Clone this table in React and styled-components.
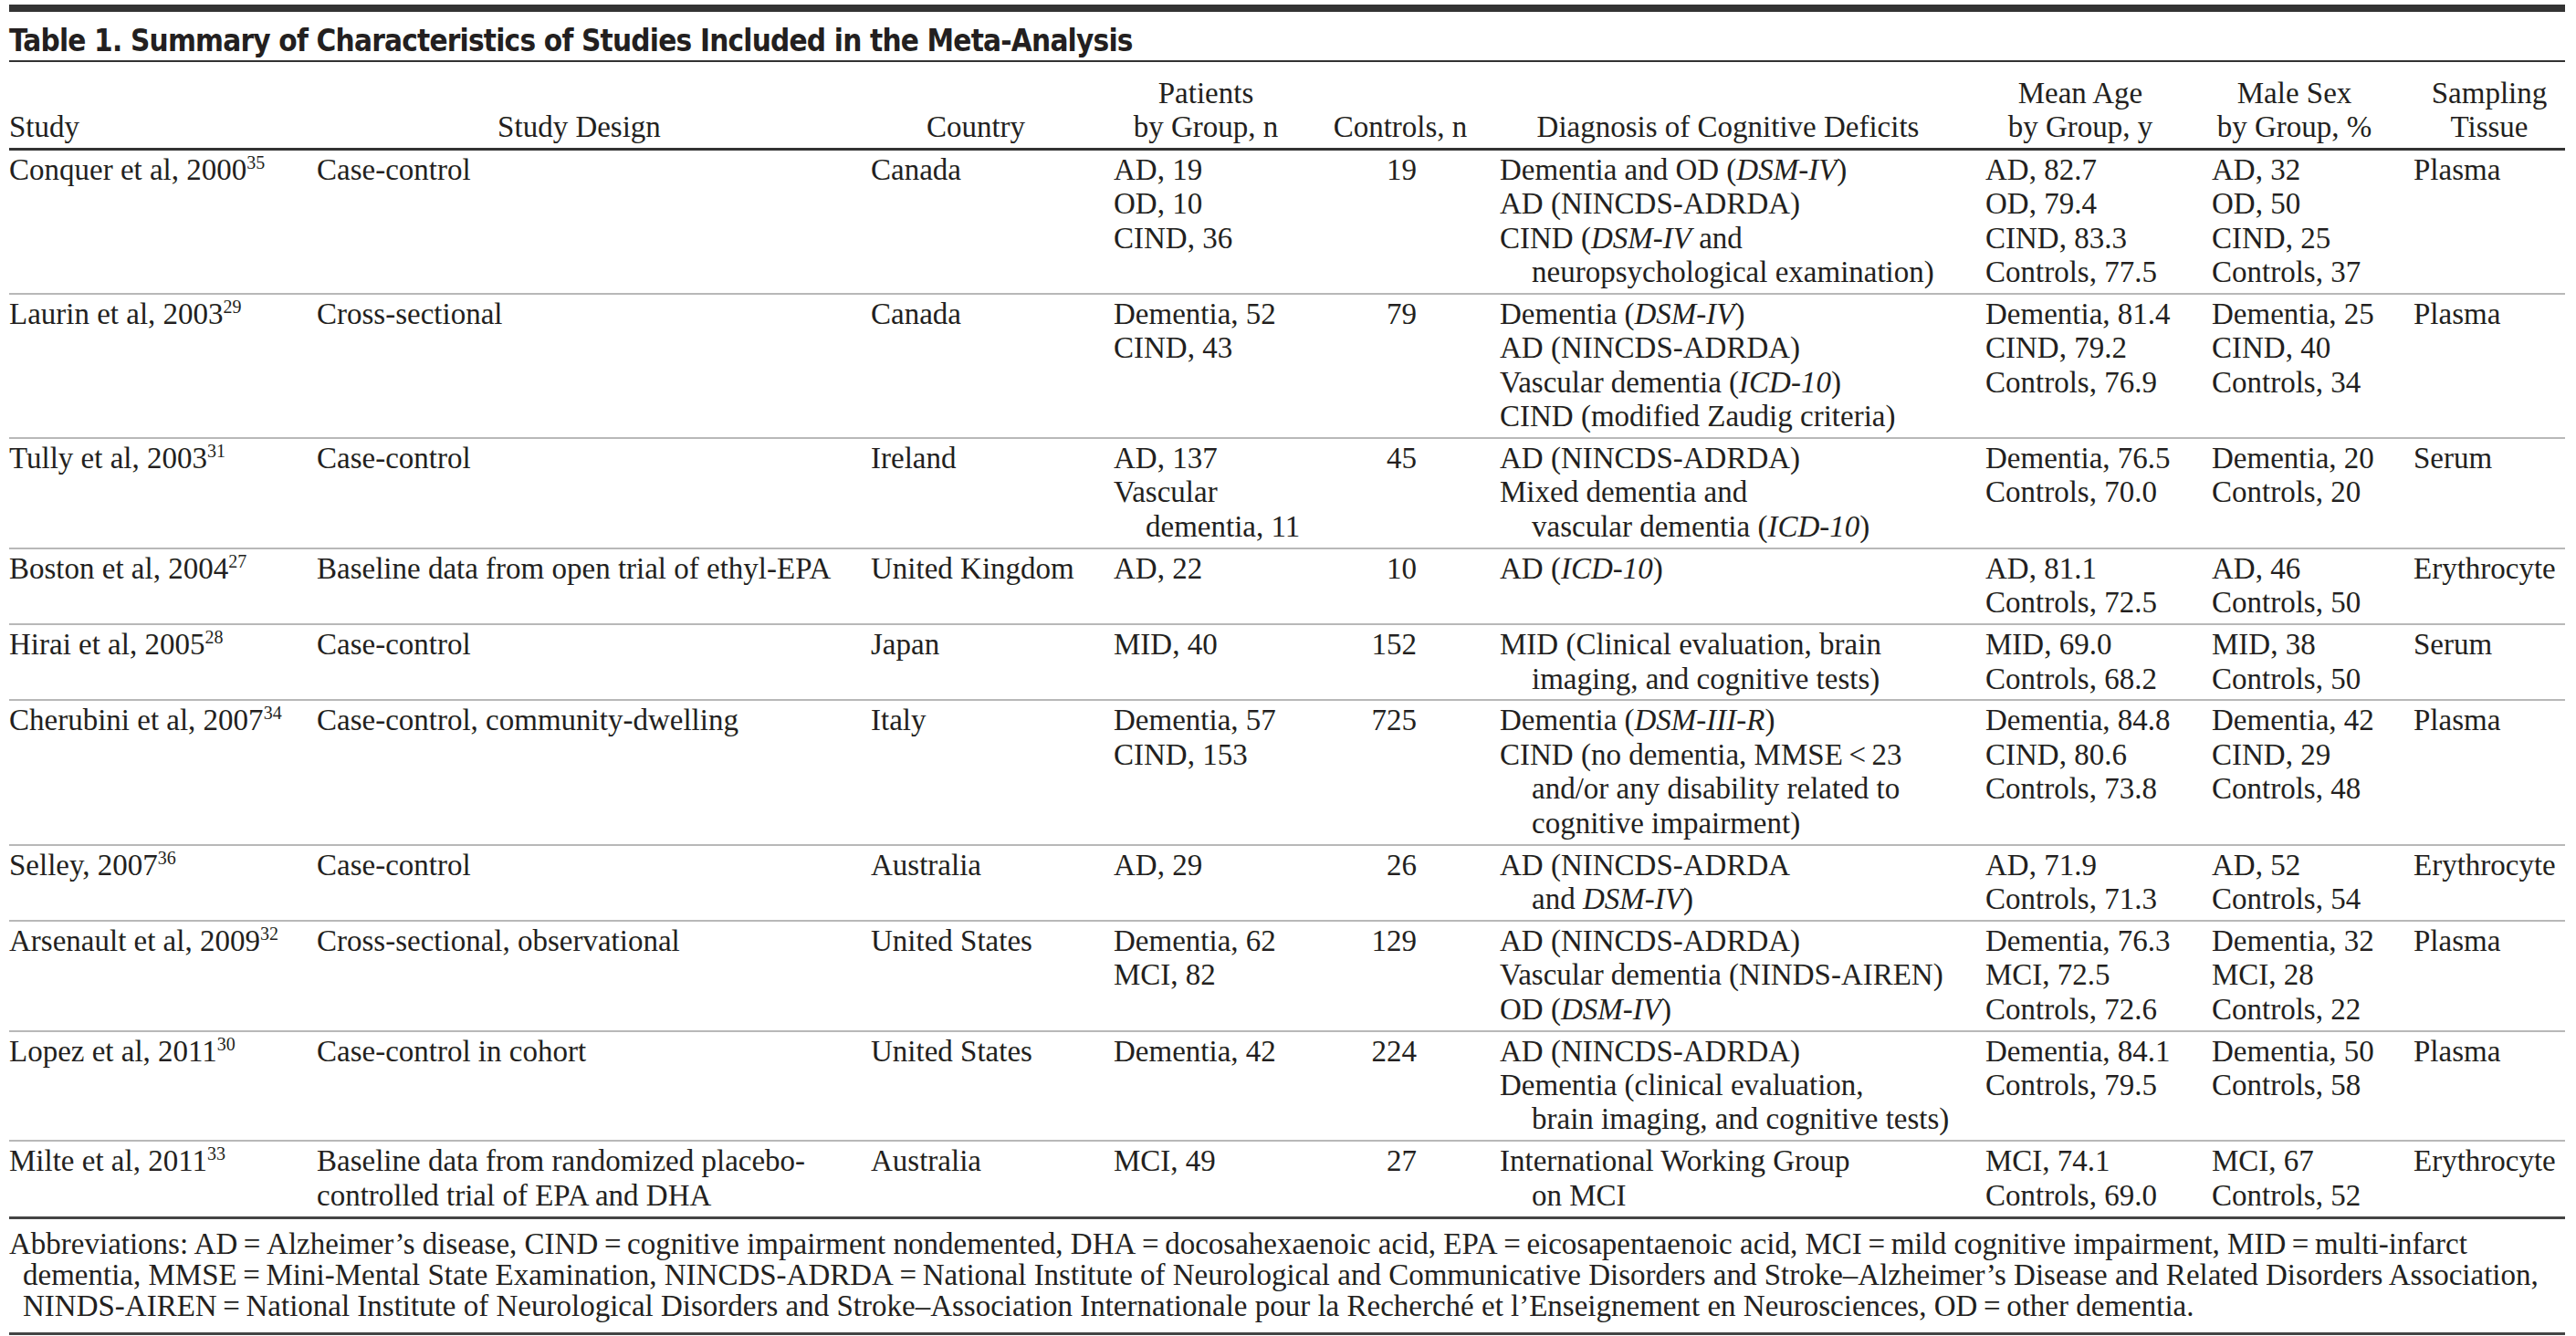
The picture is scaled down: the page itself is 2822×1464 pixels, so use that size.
import React from 'react';
import styled, { createGlobalStyle } from 'styled-components';

const GlobalStyle = createGlobalStyle`
    body {
        margin: 0;
        background: #fff;
        color: #231f20;
    }
`;

const Page = styled.div`
    width: 2800px;
    padding: 5px 12px 0 10px;
    font-family: 'Liberation Serif', 'Times New Roman', serif;
`;

const TopBar = styled.div`
    height: 8px;
    background: #333;
`;

const Title = styled.h1`
    margin: 0;
    padding: 12px 0 1px;
    border-bottom: 2px solid #333;
    font-family: 'Liberation Sans Narrow', 'DejaVu Sans Condensed', 'Liberation Sans', sans-serif;
    font-stretch: condensed;
    font-weight: 700;
    font-size: 33px;
    letter-spacing: -0.8px;
    line-height: 40px;
    color: #231f20;
`;

const Table = styled.table`
    width: 2800px;
    table-layout: fixed;
    border-collapse: collapse;
    font-size: 33px;
    line-height: 37.4px;
`;

const Col = styled.col`
    width: ${(p) => p.$w}px;
`;

const Th = styled.th`
    padding: 16px ${(p) => p.$pr}px 3px 0;
    font-weight: 400;
    text-align: ${(p) => p.$align || 'center'};
    vertical-align: bottom;
    white-space: nowrap;
    border-bottom: 3px solid #333;
`;

const Td = styled.td`
    padding: 3px ${(p) => p.$pr}px 3.5px 0;
    text-align: ${(p) => p.$align || 'left'};
    vertical-align: top;
    white-space: nowrap;
    border-bottom: ${(p) => (p.$last ? '3px solid #444' : '2px solid #b8b8b8')};
`;

const Line = styled.div`
    padding-left: ${(p) => (p.$indent ? '35px' : '0')};
`;

const Sup = styled.sup`
    font-size: 20px;
    line-height: 0;
    vertical-align: 12px;
`;

const Em = styled.i`
    font-style: italic;
`;

const Footnote = styled.div`
    padding: 10px 0 12px;
    font-size: 33px;
    line-height: 34.2px;
    white-space: nowrap;
    border-bottom: 3px solid #444;
`;

const NoteLine = styled.div`
    padding-left: ${(p) => (p.$indent ? '15px' : '0')};
`;

const cols = [
    { w: 337, pr: 0 },
    { w: 607, pr: 32 },
    { w: 266, pr: 36 },
    { w: 220, pr: 18 },
    { w: 203, pr: 15 },
    { w: 532, pr: 32 },
    { w: 248, pr: 40 },
    { w: 221, pr: 40 },
    { w: 166, pr: 0 },
];

const headers = [
    ['Study'],
    ['Study Design'],
    ['Country'],
    ['Patients', 'by Group, n'],
    ['Controls, n'],
    ['Diagnosis of Cognitive Deficits'],
    ['Mean Age', 'by Group, y'],
    ['Male Sex', 'by Group, %'],
    ['Sampling', 'Tissue'],
];

const ind = (x) => ({ indent: x });

const rows = [
    {
        study: 'Conquer et al, 2000',
        ref: 35,
        design: ['Case-control'],
        country: 'Canada',
        patients: ['AD, 19', 'OD, 10', 'CIND, 36'],
        controls: '19',
        diagnosis: [
            <>Dementia and OD (<Em>DSM-IV</Em>)</>,
            'AD (NINCDS-ADRDA)',
            <>CIND (<Em>DSM-IV</Em> and</>,
            ind('neuropsychological examination)'),
        ],
        age: ['AD, 82.7', 'OD, 79.4', 'CIND, 83.3', 'Controls, 77.5'],
        male: ['AD, 32', 'OD, 50', 'CIND, 25', 'Controls, 37'],
        tissue: 'Plasma',
    },
    {
        study: 'Laurin et al, 2003',
        ref: 29,
        design: ['Cross-sectional'],
        country: 'Canada',
        patients: ['Dementia, 52', 'CIND, 43'],
        controls: '79',
        diagnosis: [
            <>Dementia (<Em>DSM-IV</Em>)</>,
            'AD (NINCDS-ADRDA)',
            <>Vascular dementia (<Em>ICD-10</Em>)</>,
            'CIND (modified Zaudig criteria)',
        ],
        age: ['Dementia, 81.4', 'CIND, 79.2', 'Controls, 76.9'],
        male: ['Dementia, 25', 'CIND, 40', 'Controls, 34'],
        tissue: 'Plasma',
    },
    {
        study: 'Tully et al, 2003',
        ref: 31,
        design: ['Case-control'],
        country: 'Ireland',
        patients: ['AD, 137', 'Vascular', ind('dementia, 11')],
        controls: '45',
        diagnosis: [
            'AD (NINCDS-ADRDA)',
            'Mixed dementia and',
            ind(<>vascular dementia (<Em>ICD-10</Em>)</>),
        ],
        age: ['Dementia, 76.5', 'Controls, 70.0'],
        male: ['Dementia, 20', 'Controls, 20'],
        tissue: 'Serum',
    },
    {
        study: 'Boston et al, 2004',
        ref: 27,
        design: ['Baseline data from open trial of ethyl-EPA'],
        country: 'United Kingdom',
        patients: ['AD, 22'],
        controls: '10',
        diagnosis: [<>AD (<Em>ICD-10</Em>)</>],
        age: ['AD, 81.1', 'Controls, 72.5'],
        male: ['AD, 46', 'Controls, 50'],
        tissue: 'Erythrocyte',
    },
    {
        study: 'Hirai et al, 2005',
        ref: 28,
        design: ['Case-control'],
        country: 'Japan',
        patients: ['MID, 40'],
        controls: '152',
        diagnosis: ['MID (Clinical evaluation, brain', ind('imaging, and cognitive tests)')],
        age: ['MID, 69.0', 'Controls, 68.2'],
        male: ['MID, 38', 'Controls, 50'],
        tissue: 'Serum',
    },
    {
        study: 'Cherubini et al, 2007',
        ref: 34,
        design: ['Case-control, community-dwelling'],
        country: 'Italy',
        patients: ['Dementia, 57', 'CIND, 153'],
        controls: '725',
        diagnosis: [
            <>Dementia (<Em>DSM-III-R</Em>)</>,
            'CIND (no dementia, MMSE\u2009<\u200923',
            ind('and/or any disability related to'),
            ind('cognitive impairment)'),
        ],
        age: ['Dementia, 84.8', 'CIND, 80.6', 'Controls, 73.8'],
        male: ['Dementia, 42', 'CIND, 29', 'Controls, 48'],
        tissue: 'Plasma',
    },
    {
        study: 'Selley, 2007',
        ref: 36,
        design: ['Case-control'],
        country: 'Australia',
        patients: ['AD, 29'],
        controls: '26',
        diagnosis: ['AD (NINCDS-ADRDA', ind(<>and <Em>DSM-IV</Em>)</>)],
        age: ['AD, 71.9', 'Controls, 71.3'],
        male: ['AD, 52', 'Controls, 54'],
        tissue: 'Erythrocyte',
    },
    {
        study: 'Arsenault et al, 2009',
        ref: 32,
        design: ['Cross-sectional, observational'],
        country: 'United States',
        patients: ['Dementia, 62', 'MCI, 82'],
        controls: '129',
        diagnosis: [
            'AD (NINCDS-ADRDA)',
            'Vascular dementia (NINDS-AIREN)',
            <>OD (<Em>DSM-IV</Em>)</>,
        ],
        age: ['Dementia, 76.3', 'MCI, 72.5', 'Controls, 72.6'],
        male: ['Dementia, 32', 'MCI, 28', 'Controls, 22'],
        tissue: 'Plasma',
    },
    {
        study: 'Lopez et al, 2011',
        ref: 30,
        design: ['Case-control in cohort'],
        country: 'United States',
        patients: ['Dementia, 42'],
        controls: '224',
        diagnosis: [
            'AD (NINCDS-ADRDA)',
            'Dementia (clinical evaluation,',
            ind('brain imaging, and cognitive tests)'),
        ],
        age: ['Dementia, 84.1', 'Controls, 79.5'],
        male: ['Dementia, 50', 'Controls, 58'],
        tissue: 'Plasma',
    },
    {
        study: 'Milte et al, 2011',
        ref: 33,
        design: ['Baseline data from randomized placebo-', 'controlled trial of EPA and DHA'],
        country: 'Australia',
        patients: ['MCI, 49'],
        controls: '27',
        diagnosis: ['International Working Group', ind('on MCI')],
        age: ['MCI, 74.1', 'Controls, 69.0'],
        male: ['MCI, 67', 'Controls, 52'],
        tissue: 'Erythrocyte',
    },
];

const Lines = ({ items }) =>
    items.map((item, i) =>
        item && item.indent ? (
            <Line key={i} $indent>
                {item.indent}
            </Line>
        ) : (
            <Line key={i}>{item}</Line>
        )
    );

const eq = '\u2009=\u2009';

const App = () => {
    return (
        <>
            <GlobalStyle />
            <Page>
                <TopBar />
                <Title>Table 1. Summary of Characteristics of Studies Included in the Meta-Analysis</Title>
                <Table>
                    <colgroup>
                        {cols.map((c, i) => (
                            <Col key={i} $w={c.w} />
                        ))}
                    </colgroup>
                    <thead>
                        <tr>
                            {headers.map((h, i) => (
                                <Th key={i} $pr={cols[i].pr} $align={i === 0 ? 'left' : 'center'}>
                                    <Lines items={h} />
                                </Th>
                            ))}
                        </tr>
                    </thead>
                    <tbody>
                        {rows.map((r, i) => {
                            const last = i === rows.length - 1;
                            return (
                                <tr key={r.study}>
                                    <Td $pr={0} $last={last}>
                                        {r.study}
                                        <Sup>{r.ref}</Sup>
                                    </Td>
                                    <Td $pr={32} $last={last}>
                                        <Lines items={r.design} />
                                    </Td>
                                    <Td $pr={36} $last={last}>
                                        {r.country}
                                    </Td>
                                    <Td $pr={18} $last={last}>
                                        <Lines items={r.patients} />
                                    </Td>
                                    <Td $pr={91} $align="right" $last={last}>
                                        {r.controls}
                                    </Td>
                                    <Td $pr={32} $last={last}>
                                        <Lines items={r.diagnosis} />
                                    </Td>
                                    <Td $pr={40} $last={last}>
                                        <Lines items={r.age} />
                                    </Td>
                                    <Td $pr={40} $last={last}>
                                        <Lines items={r.male} />
                                    </Td>
                                    <Td $pr={0} $last={last}>
                                        {r.tissue}
                                    </Td>
                                </tr>
                            );
                        })}
                    </tbody>
                </Table>
                <Footnote>
                    <NoteLine>
                        Abbreviations: AD{eq}Alzheimer’s disease, CIND{eq}cognitive impairment nondemented, DHA{eq}docosahexaenoic acid, EPA{eq}eicosapentaenoic acid, MCI{eq}mild cognitive impairment, MID{eq}multi-infarct
                    </NoteLine>
                    <NoteLine $indent>
                        dementia, MMSE{eq}Mini-Mental State Examination, NINCDS-ADRDA{eq}National Institute of Neurological and Communicative Disorders and Stroke–Alzheimer’s Disease and Related Disorders Association,
                    </NoteLine>
                    <NoteLine $indent>
                        NINDS-AIREN{eq}National Institute of Neurological Disorders and Stroke–Association Internationale pour la Recherché et l’Enseignement en Neurosciences, OD{eq}other dementia.
                    </NoteLine>
                </Footnote>
            </Page>
        </>
    );
};

export default App;
